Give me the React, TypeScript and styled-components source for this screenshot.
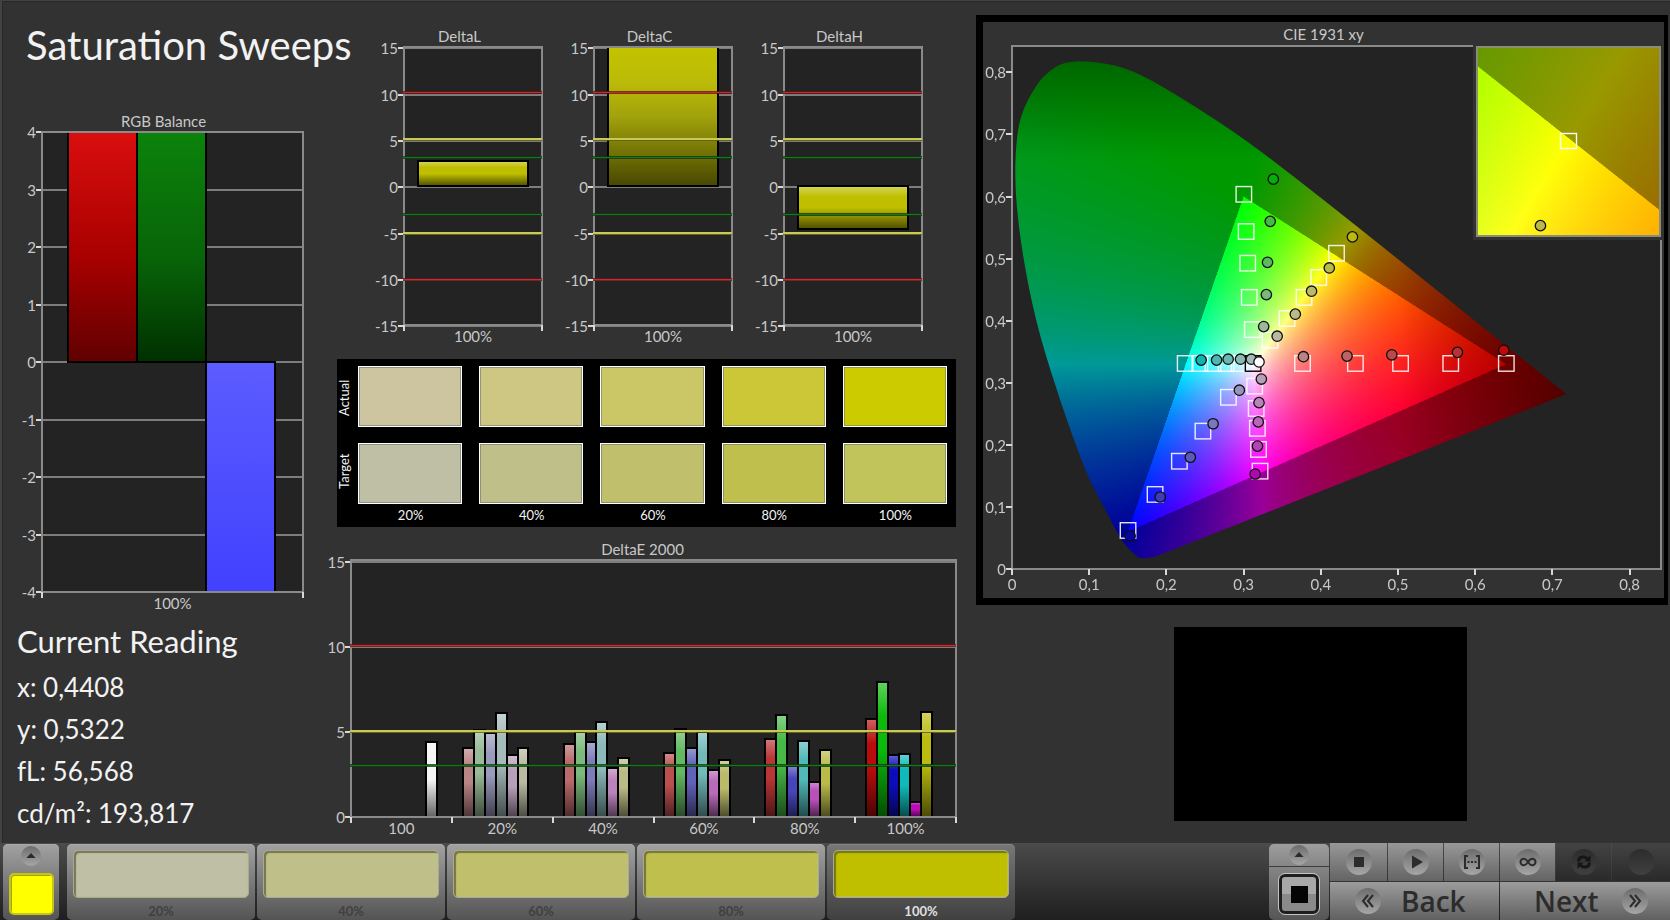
import React, { useLayoutEffect, useRef } from "react";
import styled, { createGlobalStyle, css } from "styled-components";

const GlobalStyle = createGlobalStyle`
  *, *::before, *::after { box-sizing: border-box; }
  body {
    margin: 0;
    background: #323232;
    color: #c8c8c8;
    font-family: Lato, "Liberation Sans", sans-serif;
    font-size: 15px;
    line-height: 18px;
  }
`;

/* ---------- layout ---------- */

const Page = styled.div`
  display: flex;
  flex-direction: column;
  min-height: 100vh;
  box-shadow: inset 2px 1px 0 #424242, inset 3px 2px 0 #292929;
`;

const Main = styled.main`
  flex: 1;
  display: grid;
  grid-template-columns: 337fr 619fr 712fr;
  padding-right: 2px;
`;

const Column = styled.div`
  display: flex;
  flex-direction: column;
  min-width: 0;
`;

const Title = styled.h1`
  margin: 0;
  padding: 21px 0 0 26px;
  font-size: 40px;
  line-height: 48px;
  font-weight: 400;
  white-space: nowrap;
  color: #f2f2f2;
`;

const BalanceArea = styled.div`
  padding: 43px 34px 0 22px;
`;

const Reading = styled.section`
  padding: 10px 0 0 17px;
  color: #f2f2f2;
`;

const ReadingTitle = styled.h2`
  margin: 0 0 6px;
  font-size: 31px;
  line-height: 38px;
  font-weight: 400;
`;

const ReadingLine = styled.p`
  margin: 0;
  font-size: 26px;
  line-height: 42px;
`;

const DeltaRow = styled.div`
  display: grid;
  grid-template-columns: repeat(3, 1fr);
  column-gap: 24px;
  padding: 27px 34px 0 39px;
`;

const DeltaEArea = styled.div`
  padding-top: 13px;
`;

/* ---------- charts ---------- */

const Chart = styled.figure<{ $gutter: number }>`
  margin: 0;
  display: flex;
  flex-direction: column;
  padding-left: ${(p) => p.$gutter}px;
`;

const Caption = styled.figcaption<{ $shift: number }>`
  height: 20px;
  text-align: center;
  padding-right: ${(p) => p.$shift}px;
`;

const Plot = styled.svg<{ $height: number }>`
  display: block;
  width: 100%;
  height: ${(p) => p.$height}px;
  overflow: visible;
  margin-bottom: 20px;

  text {
    fill: #c8c8c8;
    font-size: 15px;
  }
  line {
    shape-rendering: crispEdges;
  }
`;

const SharedGradients = styled.svg`
  position: absolute;
  width: 0;
  height: 0;
`;

type Threshold = { at: number; kind: "red" | "yellow" | "green" };
type Bar = { x: number; w: number; from: number; to: number; fill: string };

type BarChartProps = {
  id: string;
  title: string;
  height: number;
  gutter: number;
  shift: number;
  min: number;
  max: number;
  ticks: number[];
  groups: string[];
  bars: Bar[];
  thresholds?: Threshold[];
};

const thresholdInk = {
  red: { band: "#6e1010", line: "#b83236", width: 1 },
  yellow: { band: "#5c5c10", line: "#c9c956", width: 2 },
  green: { band: "#0c3a0c", line: "#1d7420", width: 1 },
};

function BarChart(props: BarChartProps) {
  const { min, max, groups } = props;
  const y = (v: number) => `${((max - v) / (max - min)) * 100}%`;
  const edges = [...groups.map((_, i) => i / groups.length), 1];
  return (
    <Chart $gutter={props.gutter}>
      <Caption $shift={props.shift}>{props.title}</Caption>
      <Plot $height={props.height} role="img" aria-label={props.title}>
        <defs>
          <linearGradient id={`${props.id}-shade`} x1="0" y1="0" x2="0" y2="1">
            <stop offset="0" stopColor="#fff" stopOpacity="0.35" />
            <stop offset="0.25" stopColor="#fff" stopOpacity="0" />
            <stop offset="0.5" stopColor="#000" stopOpacity="0" />
            <stop offset="1" stopColor="#000" stopOpacity="0.6" />
          </linearGradient>
        </defs>
        <rect width="100%" height="100%" fill="#232323" />
        {props.ticks.map((t) => (
          <g key={t}>
            <line x1="0" x2="100%" y1={y(t)} y2={y(t)} stroke="#7d7d7d" strokeWidth="2" />
            <line x1="-6" x2="0" y1={y(t)} y2={y(t)} stroke="#d8d8d8" strokeWidth="2" />
            <text x="-6" y={y(t)} dy="6" textAnchor="end">
              {t}
            </text>
          </g>
        ))}
        {props.bars.map((b, i) => {
          const top = Math.min(max, Math.max(b.from, b.to));
          const bottom = Math.max(min, Math.min(b.from, b.to));
          const box = {
            x: `${b.x * 100}%`,
            y: y(top),
            width: `${b.w * 100}%`,
            height: `${((top - bottom) / (max - min)) * 100}%`,
          };
          return (
            <g key={i}>
              <rect {...box} fill={b.fill} />
              {!b.fill.startsWith("url") && <rect {...box} fill={`url(#${props.id}-shade)`} />}
              <rect {...box} fill="none" stroke="#000" strokeWidth="2" shapeRendering="crispEdges" />
            </g>
          );
        })}
        <rect width="100%" height="100%" fill="none" stroke="#8a8a8a" strokeWidth="2" />
        {props.thresholds?.map((t) => {
          const ink = thresholdInk[t.kind];
          return (
            <g key={t.at}>
              <line x1="-1" x2="100%" y1={y(t.at)} y2={y(t.at)} stroke={ink.band} strokeWidth="3" strokeOpacity="0.8" />
              <line x1="-1" x2="100%" y1={y(t.at)} y2={y(t.at)} stroke={ink.line} strokeWidth={ink.width} />
            </g>
          );
        })}
        {edges.map((e) => (
          <svg key={e} x={`${e * 100}%`} y="100%" overflow="visible">
            <line x1="0" x2="0" y1="0" y2="6" stroke="#d8d8d8" strokeWidth="2" />
          </svg>
        ))}
        {groups.map((g, i) => (
          <text key={g} x={`${((i + 0.5) / groups.length) * 100}%`} y="100%" dy="17" textAnchor="middle">
            {g}
          </text>
        ))}
      </Plot>
    </Chart>
  );
}

function BarGradients() {
  return (
    <SharedGradients aria-hidden="true">
      <defs>
        <linearGradient id="balance-red" x1="0" y1="0" x2="0" y2="1">
          <stop offset="0" stopColor="#da0e0e" />
          <stop offset="0.55" stopColor="#a80000" />
          <stop offset="1" stopColor="#600000" />
        </linearGradient>
        <linearGradient id="balance-green" x1="0" y1="0" x2="0" y2="1">
          <stop offset="0" stopColor="#0b830b" />
          <stop offset="0.55" stopColor="#086408" />
          <stop offset="1" stopColor="#003000" />
        </linearGradient>
        <linearGradient id="balance-blue" x1="0" y1="0" x2="0" y2="1">
          <stop offset="0" stopColor="#5c5cff" />
          <stop offset="1" stopColor="#4141ff" />
        </linearGradient>
        <linearGradient id="chroma-yellow" x1="0" y1="0" x2="0" y2="1">
          <stop offset="0" stopColor="#c3c300" />
          <stop offset="0.25" stopColor="#bbbb08" />
          <stop offset="0.5" stopColor="#a2a20c" />
          <stop offset="1" stopColor="#474700" />
        </linearGradient>
      </defs>
    </SharedGradients>
  );
}

const deltaTicks = [15, 10, 5, 0, -5, -10, -15];
const deltaThresholds: Threshold[] = [
  { at: 10.25, kind: "red" },
  { at: 5.2, kind: "yellow" },
  { at: 3.2, kind: "green" },
  { at: -2.9, kind: "green" },
  { at: -4.95, kind: "yellow" },
  { at: -9.95, kind: "red" },
];

const deltas = [
  { title: "DeltaL", from: 0.15, to: 2.8, fill: "#bfbf00" },
  { title: "DeltaC", from: 0.15, to: 18, fill: "url(#chroma-yellow)" },
  { title: "DeltaH", from: 0.15, to: -4.5, fill: "#bfbf00" },
];

const errorGroups: { name: string; values: [number, string][] }[] = [
  {
    name: "20%",
    values: [[4.06, "#b98484"], [5.12, "#98ba98"], [4.94, "#9a9abd"], [6.11, "#a5baba"], [3.63, "#b9a0b9"], [4.06, "#babaa2"]],
  },
  {
    name: "40%",
    values: [[4.3, "#ba6a6a"], [5.02, "#7cb97c"], [4.38, "#7c7cba"], [5.6, "#8cb9b9"], [2.89, "#ba84ba"], [3.48, "#baba86"]],
  },
  {
    name: "60%",
    values: [[3.77, "#ba4f4f"], [5.18, "#62b962"], [4.06, "#6262ba"], [5, "#72b9b9"], [2.77, "#b96ab9"], [3.36, "#baba6a"]],
  },
  {
    name: "80%",
    values: [[4.59, "#ba3535"], [6, "#46ba46"], [3, "#4646ba"], [4.47, "#52b9b9"], [2.07, "#ba50ba"], [3.95, "#baba4a"]],
  },
  {
    name: "100%",
    values: [[5.76, "#ba0c0c"], [7.93, "#0cba0c"], [3.65, "#0c0cba"], [3.71, "#10baba"], [0.9, "#ba0cba"], [6.17, "#baba10"]],
  },
];

const groupShare = 1 / 6;
const slot = 11 / 608;
const errorBars: Bar[] = [
  { x: 0.124, w: slot, from: 0, to: 4.4, fill: "#f4f4f4" },
  ...errorGroups.flatMap((g, gi) =>
    g.values.map(([value, fill], i) => ({
      x: (gi + 1) * groupShare + slot * (i + 1),
      w: slot,
      from: 0,
      to: value,
      fill,
    }))
  ),
];

/* ---------- colour comparison ---------- */

const Swatches = styled.table`
  width: 100%;
  height: 168px;
  margin-top: 14px;
  background: #000;
  border-spacing: 0;
  table-layout: fixed;
  color: #f4f4f4;
  font-size: 13px;
  line-height: 16px;

  th { font-weight: 400; padding: 0; }
  td { padding: 7px 9px 9px 8px; height: 77px; }
  tbody tr:last-child td { padding-bottom: 3px; height: 71px; }
  tfoot th { height: 20px; vertical-align: top; }
  col:first-child { width: 13px; }
`;

const RowHead = styled.th`
  writing-mode: vertical-rl;
  transform: rotate(180deg);
  text-align: center;
`;

const Swatch = styled.div<{ $color: string }>`
  height: 61px;
  background: ${(p) => p.$color};
  border: 1px solid #fff;
  box-shadow: inset 0 0 0 1px rgba(110, 115, 110, 0.6);
`;

const steps = ["20%", "40%", "60%", "80%", "100%"];
const actual = ["#ccc5a0", "#cec784", "#ccc766", "#ccc737", "#cccb00"];
const target = ["#bfbfa5", "#bfbf8a", "#bfbf6c", "#bfbf4e", "#c1c45a"];

/* ---------- CIE diagram ---------- */

const CieColumn = styled(Column)`
  padding: 15px 0 0 20px;
`;

const CiePanel = styled.section`
  border: solid #000;
  border-width: 7px 4px 7px 7px;
  height: 590px;
  padding: 2px 3px 0 29px;
`;

const CieTitle = styled.h2`
  margin: 0;
  height: 22px;
  font-size: 15px;
  line-height: 20px;
  font-weight: 400;
  text-align: center;
  padding-right: 26px;
`;

const CiePlotArea = styled.div`
  position: relative;
  height: 523px;
  background: #232323;
`;

const Layer = styled.canvas`
  position: absolute;
  inset: 0;
  width: 100%;
  height: 100%;
`;

const Overlay = styled.svg`
  position: absolute;
  inset: 0;
  width: 100%;
  height: 100%;
  overflow: visible;

  text {
    fill: #c8c8c8;
    font-size: 15px;
  }
  line {
    shape-rendering: crispEdges;
  }
`;

const Inset = styled.div`
  position: absolute;
  top: 0;
  right: 0;
  width: 185px;
  height: 191px;
  border: 2px solid #8d8d74;
  box-shadow: 0 0 0 3px #323232;
`;

const CIE_X = 0.8407;
const CIE_Y = 0.8425;

const locus: [number, number][] = [
  [0.165, 0.018], [0.155, 0.0266], [0.14, 0.049], [0.1137, 0.113], [0.1008, 0.142],
  [0.0844, 0.193], [0.0567, 0.292], [0.0303, 0.4], [0.013, 0.51], [0.0044, 0.6],
  [0.004, 0.67], [0.01, 0.7304], [0.0316, 0.781], [0.049, 0.8036], [0.069, 0.8175],
  [0.105, 0.818], [0.155, 0.8059], [0.229, 0.752], [0.302, 0.692], [0.3731, 0.6245],
  [0.4441, 0.5547], [0.5125, 0.4866], [0.5752, 0.4242], [0.627, 0.3725], [0.6915, 0.3083],
];

/* Brightest displayable colour for a chromaticity; outside the gamut it is dimmed. */
function chromaColor(x: number, y: number): [number, number, number] {
  const yy = Math.max(y, 0.0001);
  const X = x / yy;
  const Z = (1 - x - yy) / yy;
  let r = 3.2406 * X - 1.5372 - 0.4986 * Z;
  let g = -0.9689 * X + 1.8758 + 0.0415 * Z;
  let b = 0.0557 * X - 0.204 + 1.057 * Z;
  const inside = r >= 0 && g >= 0 && b >= 0;
  r = Math.max(r, 0);
  g = Math.max(g, 0);
  b = Math.max(b, 0);
  const m = Math.max(r, g, b);
  let k = inside ? 255 : 153;
  if (x > 0.5) k *= 1 - (x - 0.5) * 2.1;
  if (y > 0.66) k *= 1 - (y - 0.66) * 2.1;
  return [(k * r) / m, (k * g) / m, (k * b) / m];
}

function paint(canvas: HTMLCanvasElement, x0: number, x1: number, y0: number, y1: number) {
  const ctx = canvas.getContext("2d");
  if (!ctx) return;
  const { width, height } = canvas;
  const image = ctx.createImageData(width, height);
  for (let j = 0; j < height; j++) {
    const y = y1 - ((j + 0.5) / height) * (y1 - y0);
    for (let i = 0; i < width; i++) {
      const x = x0 + ((i + 0.5) / width) * (x1 - x0);
      const [r, g, b] = chromaColor(x, y);
      const o = (j * width + i) * 4;
      image.data[o] = r;
      image.data[o + 1] = g;
      image.data[o + 2] = b;
      image.data[o + 3] = 255;
    }
  }
  ctx.globalCompositeOperation = "source-over";
  ctx.putImageData(image, 0, 0);

  const px = (p: [number, number]): [number, number] => [
    ((p[0] - x0) / (x1 - x0)) * width,
    ((y1 - p[1]) / (y1 - y0)) * height,
  ];
  ctx.globalCompositeOperation = "destination-in";
  ctx.beginPath();
  ctx.moveTo(...px([0.187, 0.0205]));
  ctx.quadraticCurveTo(...px([0.175, 0.0165]), ...px(locus[0]));
  for (let i = 1; i < locus.length - 1; i++) {
    const a = px(locus[i]);
    const n = px(locus[i + 1]);
    ctx.quadraticCurveTo(a[0], a[1], (a[0] + n[0]) / 2, (a[1] + n[1]) / 2);
  }
  ctx.lineTo(...px([0.718, 0.2818]));
  ctx.closePath();
  ctx.fill();
}

function Chromaticity(props: { x0: number; x1: number; y0: number; y1: number; width: number; height: number }) {
  const ref = useRef<HTMLCanvasElement>(null);
  const { x0, x1, y0, y1 } = props;
  useLayoutEffect(() => {
    if (ref.current) paint(ref.current, x0, x1, y0, y1);
  }, [x0, x1, y0, y1]);
  return <Layer ref={ref} width={props.width} height={props.height} aria-hidden="true" />;
}

const targets: [number, number][] = [
  [0.3, 0.604], [0.303, 0.544], [0.305, 0.493], [0.307, 0.438], [0.311, 0.386],
  [0.334, 0.369], [0.356, 0.404], [0.378, 0.438], [0.397, 0.47], [0.42, 0.509],
  [0.376, 0.3315], [0.4445, 0.3315], [0.503, 0.3315], [0.568, 0.3315], [0.64, 0.3315],
  [0.224, 0.3315], [0.243, 0.3315], [0.26, 0.3315], [0.277, 0.3315], [0.294, 0.3315],
  [0.28, 0.277], [0.247, 0.2225], [0.2165, 0.174], [0.185, 0.1205], [0.15, 0.0625],
  [0.314, 0.295], [0.316, 0.259], [0.3175, 0.227], [0.319, 0.193], [0.321, 0.158],
];

const readings: [number, number, string][] = [
  [0.3385, 0.628, "#04ae08"], [0.3345, 0.56, "#46ba46"], [0.331, 0.494, "#5cb960"],
  [0.3295, 0.442, "#78b97c"], [0.326, 0.3905, "#9aba9a"],
  [0.441, 0.535, "#baba10"], [0.411, 0.485, "#baba4a"], [0.388, 0.4475, "#baba6a"],
  [0.367, 0.4105, "#baba86"], [0.3435, 0.375, "#babaa2"],
  [0.245, 0.3365, "#10b4b4"], [0.265, 0.3365, "#4eb6b2"], [0.28, 0.338, "#6cb6b2"],
  [0.296, 0.338, "#8cb8b4"], [0.31, 0.338, "#a5baba"],
  [0.3775, 0.342, "#b98484"], [0.434, 0.343, "#ba6464"], [0.492, 0.345, "#ba4a4a"],
  [0.577, 0.349, "#ba3035"], [0.637, 0.3525, "#c00808"],
  [0.323, 0.306, "#b9a0b9"], [0.32, 0.268, "#ba84ba"], [0.319, 0.237, "#b966b9"],
  [0.318, 0.198, "#b444b4"], [0.315, 0.153, "#b008b0"],
  [0.2945, 0.288, "#9494bd"], [0.2605, 0.234, "#7878ba"], [0.231, 0.18, "#5a5ab8"],
  [0.192, 0.116, "#3c3cb4"], [0.153, 0.053, "#0404a8"],
];

const pct = (v: number) => `${v * 100}%`;
const comma = (v: number) => String(v).replace(".", ",");

function CieChart() {
  const ticks = [0, 0.1, 0.2, 0.3, 0.4, 0.5, 0.6, 0.7, 0.8];
  const cx = (x: number) => pct(x / CIE_X);
  const cy = (y: number) => pct(1 - y / CIE_Y);
  const square = (x: number, y: number, stroke: string, key?: number) => (
    <svg key={key} x={cx(x)} y={cy(y)} overflow="visible">
      <rect x="-7.5" y="-7.5" width="15.5" height="15.5" fill="none" stroke={stroke} strokeWidth="1.4" />
    </svg>
  );
  return (
    <CiePanel>
      <CieTitle>CIE 1931 xy</CieTitle>
      <CiePlotArea>
        <Chromaticity x0={0} x1={CIE_X} y0={0} y1={CIE_Y} width={1296} height={1046} />
        <Overlay role="img" aria-label="CIE 1931 xy chromaticity diagram">
          <rect width="100%" height="100%" fill="none" stroke="#8a8a8a" strokeWidth="2" />
          {ticks.map((t) => (
            <React.Fragment key={t}>
              <svg x={cx(t)} y="100%" overflow="visible">
                <line x1="0" x2="0" y1="0" y2="6" stroke="#d8d8d8" strokeWidth="2" />
                <text x="0" y="21" textAnchor="middle">{comma(t)}</text>
              </svg>
              <svg x="0" y={cy(t)} overflow="visible">
                <line x1="-6" x2="0" y1="0" y2="0" stroke="#d8d8d8" strokeWidth="2" />
                <text x="-6" y="6" textAnchor="end">{comma(t)}</text>
              </svg>
            </React.Fragment>
          ))}
          {targets.map(([x, y], i) => square(x, y, "rgba(255,255,255,0.88)", i))}
          {square(0.312, 0.3315, "#000")}
          {readings.map(([x, y, fill]) => (
            <circle key={`${x}-${y}`} cx={cx(x)} cy={cy(y)} r="5.2" fill={fill} stroke="#101010" strokeWidth="1.3" />
          ))}
          <circle cx={cx(0.32)} cy={cy(0.3335)} r="5.2" fill="#fff" stroke="#101010" strokeWidth="1.3" />
        </Overlay>
        <Inset>
          <Chromaticity x0={0.3925} x1={0.4455} y0={0.477} y1={0.532} width={362} height={374} />
          <Overlay aria-hidden="true">
            <svg x="50%" y="50%" overflow="visible">
              <rect x="-8" y="-8" width="16" height="15" fill="none" stroke="#fff" strokeWidth="1.4" />
            </svg>
            <circle cx="34.5%" cy="95%" r="5.2" fill="#baba4a" stroke="#101010" strokeWidth="1.3" />
          </Overlay>
        </Inset>
      </CiePlotArea>
    </CiePanel>
  );
}

const PatternPreview = styled.div`
  width: 293px;
  height: 194px;
  margin: 22px 0 0 198px;
  background: #000;
`;

/* ---------- toolbar ---------- */

const raised = css`
  background: linear-gradient(#a2a2a2, #7a7a7a 50%, #545454);
  box-shadow: inset 0 1px 0 #a8a8a8;
`;

const Toolbar = styled.footer`
  display: flex;
  height: 77px;
  padding: 1px 0 0 3px;
  background: linear-gradient(#4b4b4b, #1f1f1f);
`;

const BaseButton = styled.button`
  margin: 0;
  padding: 0;
  border: 0;
  color: #2c2c2c;
  font: inherit;
  display: flex;
  align-items: center;
  justify-content: center;
`;

const PickerButton = styled(BaseButton)`
  ${raised}
  width: 56px;
  flex-direction: column;
  justify-content: space-between;
  padding: 2px 0 5px;
  border-radius: 5px;
  margin-right: 8px;
`;

const CurrentColor = styled.span`
  width: 45px;
  height: 42px;
  border: 2px solid #c4c41c;
  border-radius: 5px;
  background: #ff0;
  box-shadow: inset 1px 1px 0 #a5a500;
`;

const StepButton = styled(BaseButton)<{ $active?: boolean }>`
  ${raised}
  width: 188px;
  margin-right: 2px;
  padding: 6px 6px 0;
  flex-direction: column;
  justify-content: space-between;
  align-items: stretch;
  border-radius: 5px;
  font-size: 13px;
  line-height: 18px;
  font-weight: 700;
  color: #404040;
  ${(p) =>
    p.$active &&
    css`
      background: linear-gradient(#777, #404040);
      box-shadow: inset 0 1px 0 #858585;
      color: #e0e0e0;
    `}
`;

const StepColor = styled.span<{ $color: string }>`
  height: 48px;
  border: 1px solid #a9a98c;
  border-radius: 5px;
  background: ${(p) => p.$color};
  box-shadow: inset 2px 2px 1px rgba(70, 70, 40, 0.6), inset -1px -1px 0 rgba(190, 190, 150, 0.5);
`;

const Spacer = styled.div`
  flex: 1;
`;

const WindowControls = styled.div`
  display: flex;
  flex-direction: column;
  width: 60px;
  margin-right: 1px;
  gap: 1px;
`;

const WindowMenu = styled(BaseButton)`
  height: 22px;
  background: linear-gradient(#9e9e9e, #868686);
  border-radius: 5px 5px 0 0;
`;

const WindowButton = styled(BaseButton)`
  flex: 1;
  background: linear-gradient(#858585, #555);
  border-radius: 0 0 5px 5px;
`;

const WindowGlyph = styled.span`
  width: 40px;
  height: 40px;
  border: 3px solid #1e1e1e;
  border-radius: 6px;
  outline: 1px solid #c4c4c4;
  background: linear-gradient(#a8a8a8 50%, #8a8a8a 50%);
  padding: 9px;

  &::before {
    content: "";
    display: block;
    width: 17px;
    height: 17px;
    background: #050505;
  }
`;

const Transport = styled.div`
  display: grid;
  grid-template-columns: 57px 55px 55px 55px 55px 58px;
  grid-template-rows: 38px 38px;
  column-gap: 1px;
  row-gap: 1px;
  margin-top: -1px;
`;

const TransportButton = styled(BaseButton)<{ $off?: boolean }>`
  background: ${(p) => (p.$off ? "linear-gradient(#434343, #2a2a2a)" : "linear-gradient(#989898, #646464)")};
`;

const NavButton = styled(BaseButton)<{ $forward?: boolean }>`
  grid-column: span 3;
  background: linear-gradient(#9c9c9c, #606060);
  justify-content: ${(p) => (p.$forward ? "space-between" : "flex-start")};
  padding: ${(p) => (p.$forward ? "0 22px 0 34px" : "0 0 0 25px")};
  gap: 20px;
  font-family: "Open Sans", "Noto Sans", sans-serif;
  font-size: 28px;
  line-height: 36px;
  font-weight: 600;
`;

const Knob = styled.span<{ $size: number; $off?: boolean }>`
  width: ${(p) => p.$size}px;
  height: ${(p) => p.$size}px;
  border-radius: 50%;
  display: flex;
  align-items: center;
  justify-content: center;
  background: ${(p) => (p.$off ? "linear-gradient(#2c2c2c, #404040)" : "linear-gradient(#6c6c6c, #a6a6a6)")};
`;

function Glyph({ name }: { name: string }) {
  const line = { fill: "none", stroke: "#2c2c2c", strokeWidth: 2 };
  return (
    <svg width="24" height="24" viewBox="0 0 24 24" aria-hidden="true">
      {name === "up" && <path d="M6.500 14.500 12 8.500l5.500 6z" fill="#2a2a2a" />}
      {name === "stop" && <rect x="7" y="7" width="10" height="10" fill="#2c2c2c" />}
      {name === "play" && <path d="M8 5.500 19 12 8 18.500z" fill="#2c2c2c" />}
      {name === "range" && (
        <g {...line}>
          <path d="M8 6H5v12h3M16 6h3v12h-3" />
          <path d="M7.500 12h9" strokeDasharray="2 1.500" />
        </g>
      )}
      {name === "loop" && (
        <path
          {...line}
          d="M12 12c-1.500-2.300-2.600-3.200-4.300-3.200a3.200 3.200 0 0 0 0 6.400c1.700 0 2.800-.9 4.300-3.200s2.600-3.200 4.300-3.200a3.200 3.200 0 0 1 0 6.400c-1.700 0-2.800-.9-4.300-3.200z"
        />
      )}
      {name === "refresh" && (
        <g fill="none" stroke="#161616" strokeWidth="3">
          <path d="M6.500 11.500c0-5 6.500-6 9-2.500M17.500 12.500c0 5-6.500 6-9 2.500" />
          <path d="M18.500 5v6.500h-6zM5.500 19v-6.500h6z" fill="#161616" stroke="none" />
        </g>
      )}
      {name === "back" && <path {...line} d="M12 6l-5 6 5 6M17 6l-5 6 5 6" />}
      {name === "next" && <path {...line} d="M7 6l5 6-5 6M12 6l5 6-5 6" />}
    </svg>
  );
}

const transport = [
  { name: "stop", label: "Stop" },
  { name: "play", label: "Play" },
  { name: "range", label: "Range" },
  { name: "loop", label: "Loop" },
  { name: "refresh", label: "Refresh", off: true },
  { name: "none", label: "Record", off: true },
];

const stepColors = ["#bfbfa5", "#bfbf8a", "#bfbf6c", "#bfbf4e", "#bfbf00"];

export default function App() {
  return (
    <>
      <GlobalStyle />
      <BarGradients />
      <Page>
        <Main>
          <Column>
            <Title>Saturation Sweeps</Title>
            <BalanceArea>
              <BarChart
                id="balance"
                title="RGB Balance"
                height={460}
                gutter={20}
                shift={18}
                min={-4}
                max={4}
                ticks={[4, 3, 2, 1, 0, -1, -2, -3, -4]}
                groups={["100%"]}
                bars={[
                  { x: 0.098, w: 0.266, from: 0, to: 6, fill: "url(#balance-red)" },
                  { x: 0.364, w: 0.264, from: 0, to: 6, fill: "url(#balance-green)" },
                  { x: 0.63, w: 0.262, from: 0, to: -6, fill: "url(#balance-blue)" },
                ]}
              />
            </BalanceArea>
            <Reading>
              <ReadingTitle>Current Reading</ReadingTitle>
              <ReadingLine>x: 0,4408</ReadingLine>
              <ReadingLine>y: 0,5322</ReadingLine>
              <ReadingLine>fL: 56,568</ReadingLine>
              <ReadingLine>cd/m²: 193,817</ReadingLine>
            </Reading>
          </Column>

          <Column>
            <DeltaRow>
              {deltas.map((d) => (
                <BarChart
                  key={d.title}
                  id={d.title}
                  title={d.title}
                  height={278}
                  gutter={28}
                  shift={27}
                  min={-14.85}
                  max={15.15}
                  ticks={deltaTicks}
                  groups={["100%"]}
                  bars={[{ x: 0.1, w: 0.795, from: d.from, to: d.to, fill: d.fill }]}
                  thresholds={deltaThresholds}
                />
              ))}
            </DeltaRow>
            <Swatches aria-label="Actual and target colours">
              <colgroup>
                <col />
                {steps.map((s) => (
                  <col key={s} />
                ))}
              </colgroup>
              <tbody>
                <tr>
                  <RowHead scope="row">Actual</RowHead>
                  {actual.map((c) => (
                    <td key={c}><Swatch $color={c} /></td>
                  ))}
                </tr>
                <tr>
                  <RowHead scope="row">Target</RowHead>
                  {target.map((c) => (
                    <td key={c}><Swatch $color={c} /></td>
                  ))}
                </tr>
              </tbody>
              <tfoot>
                <tr>
                  <th />
                  {steps.map((s) => (
                    <th key={s} scope="col">{s}</th>
                  ))}
                </tr>
              </tfoot>
            </Swatches>
            <DeltaEArea>
              <BarChart
                id="deltaE"
                title="DeltaE 2000"
                height={257}
                gutter={14}
                shift={22}
                min={0}
                max={15.1}
                ticks={[15, 10, 5, 0]}
                groups={["100", ...steps]}
                bars={errorBars}
                thresholds={[
                  { at: 10.1, kind: "red" },
                  { at: 5.05, kind: "yellow" },
                  { at: 3.05, kind: "green" },
                ]}
              />
            </DeltaEArea>
          </Column>

          <CieColumn>
            <CieChart />
            <PatternPreview />
          </CieColumn>
        </Main>

        <Toolbar>
          <PickerButton aria-label="Choose colour">
            <Knob $size={20}><Glyph name="up" /></Knob>
            <CurrentColor />
          </PickerButton>
          {steps.map((s, i) => (
            <StepButton key={s} $active={i === 4}>
              <StepColor $color={stepColors[i]} />
              {s}
            </StepButton>
          ))}
          <Spacer />
          <WindowControls>
            <WindowMenu aria-label="Window menu"><Knob $size={20}><Glyph name="up" /></Knob></WindowMenu>
            <WindowButton aria-label="Window pattern"><WindowGlyph /></WindowButton>
          </WindowControls>
          <Transport>
            {transport.map((t) => (
              <TransportButton key={t.name} aria-label={t.label} $off={t.off}>
                <Knob $size={26} $off={t.off}><Glyph name={t.name} /></Knob>
              </TransportButton>
            ))}
            <NavButton>
              <Knob $size={26}><Glyph name="back" /></Knob>
              Back
            </NavButton>
            <NavButton $forward>
              Next
              <Knob $size={26}><Glyph name="next" /></Knob>
            </NavButton>
          </Transport>
        </Toolbar>
      </Page>
    </>
  );
}
